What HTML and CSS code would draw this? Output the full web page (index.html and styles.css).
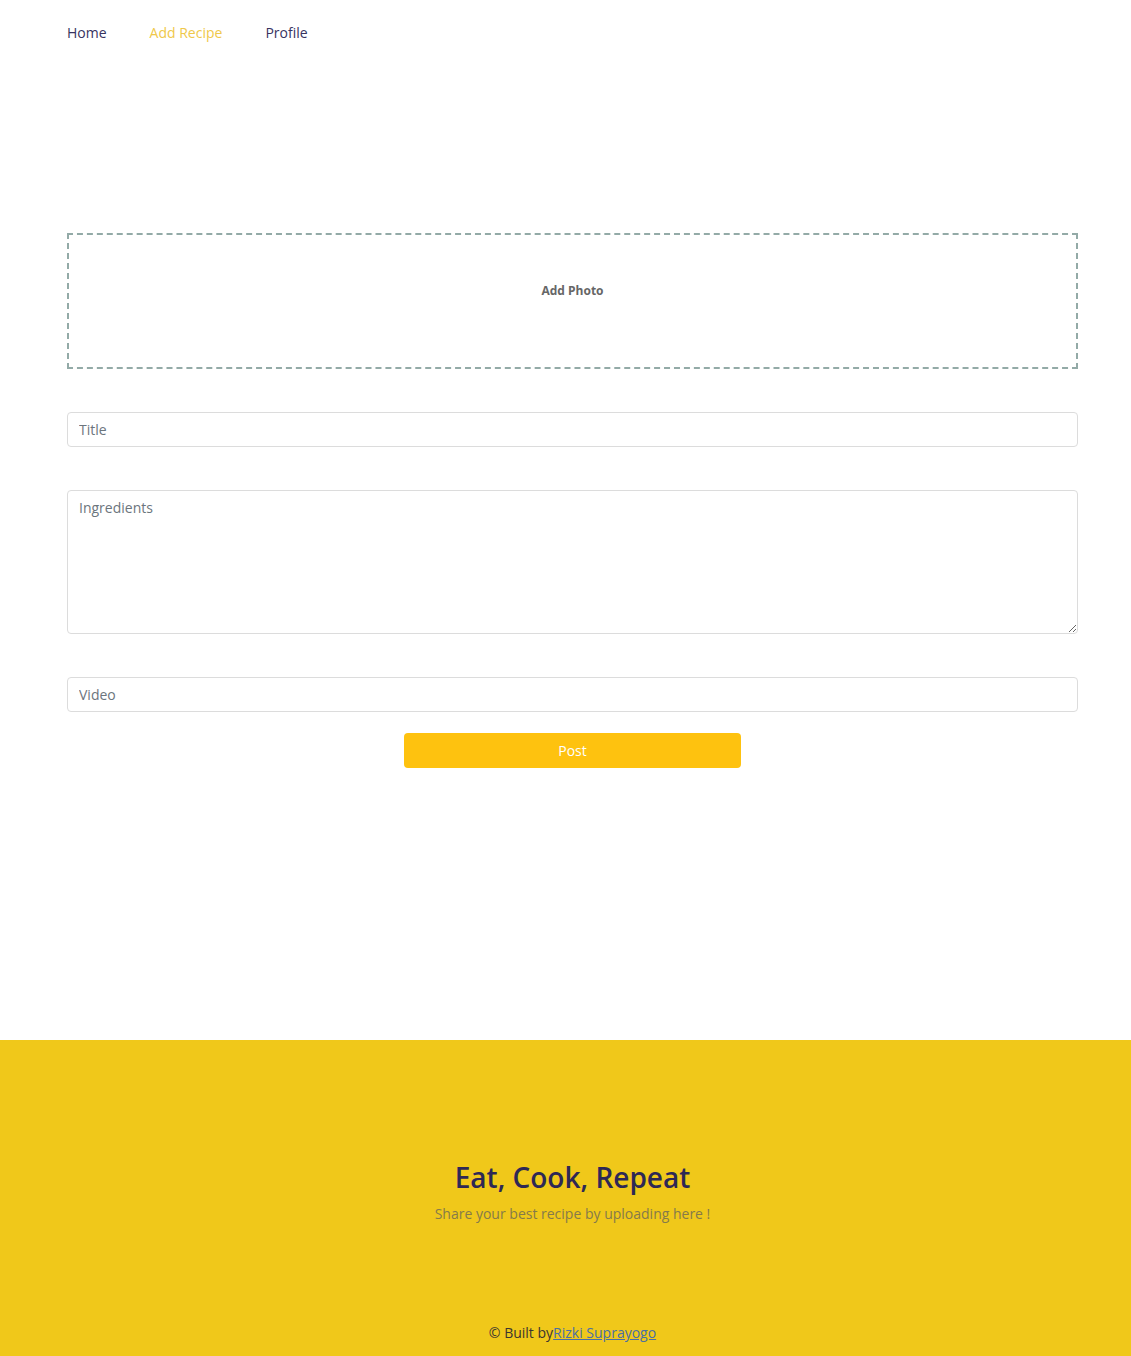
FILE: index.html
```html
<!DOCTYPE html>
<html>
<head>
<meta charset="utf-8">
<link rel="stylesheet" href="styles.css">
</head>
<body>
<nav class="nav">
  <a class="nav-link" href="#">Home</a>
  <a class="nav-link active" href="#">Add Recipe</a>
  <a class="nav-link" href="#">Profile</a>
</nav>
<main class="main">
  <form class="form">
    <div class="photo">Add Photo</div>
    <input class="field" type="text" placeholder="Title">
    <textarea class="field area" placeholder="Ingredients"></textarea>
    <input class="field" type="text" placeholder="Video">
    <button class="post" type="button">Post</button>
  </form>
</main>
<footer class="footer">
  <h1 class="footer-title">Eat, Cook, Repeat</h1>
  <p class="footer-sub">Share your best recipe by uploading here !</p>
  <p class="credit">© Built by<a href="#">Rizki Suprayogo</a></p>
</footer>
</body>
</html>
```
FILE: styles.css
```css
* { box-sizing: border-box; }
body {
  margin: 0;
  font-family: "Open Sans", "Noto Sans", sans-serif;
  background: #fff;
  color: #2e2a5a;
}
.nav {
  display: flex;
  gap: 43px;
  padding: 23px 0 0 67px;
  height: 60px;
}
.nav-link {
  font-size: 14px;
  color: #37335f;
  text-decoration: none;
}
.nav-link.active { color: #efc84a; }
.main {
  padding: 173px 53px 0 67px;
  height: 980px;
}
.form {
  display: flex;
  flex-direction: column;
  align-items: center;
}
.photo {
  width: 100%;
  height: 136px;
  border: 2px dashed #93aaa7;
  display: flex;
  align-items: center;
  justify-content: center;
  font-size: 12px;
  font-weight: 700;
  color: #666;
  padding-bottom: 22px;
}
.field {
  width: 100%;
  height: 35px;
  margin-top: 43px;
  border: 1px solid #dcdcdc;
  border-radius: 4px;
  padding: 0 11px;
  font-family: inherit;
  font-size: 14px;
  color: #333;
  outline: none;
}
.field::placeholder { color: #6c757d; }
.area {
  height: 144px;
  padding-top: 7px;
  resize: vertical;
}
.post {
  margin-top: 21px;
  width: 337px;
  height: 35px;
  border: none;
  border-radius: 4px;
  background: #fec20f;
  color: #fff;
  font-family: inherit;
  font-size: 14px;
}
.footer {
  background: #f0c81a;
  height: 316px;
  display: flex;
  flex-direction: column;
  align-items: center;
  padding: 118px 0 0 14px;
}
.footer-title {
  margin: 0;
  font-size: 28px;
  font-weight: 600;
  color: #2e2855;
}
.footer-sub {
  margin: 8px 0 0;
  font-size: 14px;
  color: #857a4a;
}
.credit {
  margin: 100px 0 0;
  font-size: 14px;
  color: #3b3530;
}
.credit a { color: #4a6fa5; }
```
